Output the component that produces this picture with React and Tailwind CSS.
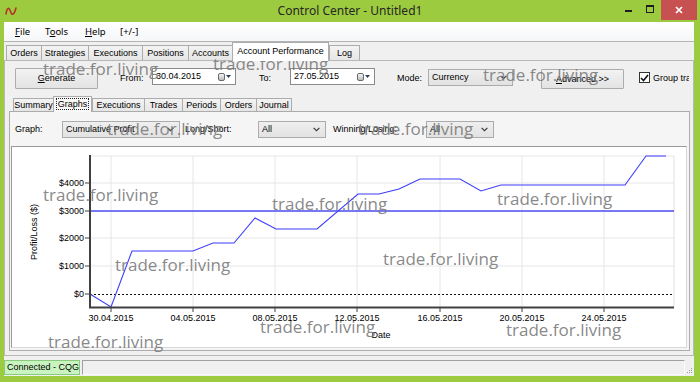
import React from "react";

const MAIN_TABS = [
  ["Orders", "w-[35px]"],
  ["Strategies", "w-[47px]"],
  ["Executions", "w-[54px]"],
  ["Positions", "w-[46px]"],
  ["Accounts", "w-[44px]"],
  ["Account Performance", "w-[97px]"],
  ["Log", "w-[31px]"],
];

const INNER_TABS = [
  ["Summary", "w-[40px]"],
  ["Graphs", "w-[39px]"],
  ["Executions", "w-[52px]"],
  ["Trades", "w-[38px]"],
  ["Periods", "w-[38px]"],
  ["Orders", "w-[36px]"],
  ["Journal", "w-[36px]"],
];

const GRID_X = [111, 193, 275, 357, 440, 522, 604];
const DATES = ["30.04.2015", "04.05.2015", "08.05.2015", "12.05.2015", "16.05.2015", "20.05.2015", "24.05.2015"];
const Y_TICKS = [
  [183, "$4000"],
  [211, "$3000"],
  [238, "$2000"],
  [266, "$1000"],
  [294, "$0"],
];
const SERIES =
  "90,294 111,307 132,251 193,251 213,243 234,243 255,218 276,229 317,229 358,194 379,194 399,189 420,179 460,179 481,191 501,185 625,185 646,156 666,156";

const wm =
  "absolute font-['Open_Sans',sans-serif] text-[17px] leading-[17px] text-[#7a7a7a]/90 whitespace-nowrap pointer-events-none";

function Chevron() {
  return (
    <svg width="7" height="5" viewBox="0 0 7 5">
      <path d="M0.6 0.8 L3.5 3.7 L6.4 0.8" fill="none" stroke="#3a3a3a" strokeWidth="1.2" />
    </svg>
  );
}

function Btn({ className, children }) {
  return (
    <div
      className={`${className} border border-[#acacac] rounded-[1px] bg-linear-to-b from-[#f2f2f2] to-[#e3e3e3] flex items-center justify-center`}
    >
      {children}
    </div>
  );
}

function Combo({ className, value }) {
  return (
    <div
      className={`${className} h-[17px] border border-[#acacac] bg-linear-to-b from-[#efefef] to-[#e2e2e2] flex items-center justify-between pl-[3px] pr-[5px]`}
    >
      <span>{value}</span>
      <Chevron />
    </div>
  );
}

function DateBox({ className, value }) {
  return (
    <div
      className={`${className} h-[17px] mt-[1px] border border-[#8a8a8a] bg-white flex items-center pl-[3px] pr-[4px]`}
    >
      <span className="flex-1">{value}</span>
      <span className="w-[7px] h-[8px] rounded-[2px] border border-[#6a6a6a] bg-linear-to-b from-[#f6f6f6] to-[#bdbdbd]" />
      <svg width="5" height="3" viewBox="0 0 5 3" className="ml-[1px]">
        <path d="M0 0 L5 0 L2.5 3 Z" fill="#2f3f5f" />
      </svg>
    </div>
  );
}

function TitleBar() {
  return (
    <div className="h-[22px] grid grid-cols-[1fr_auto_1fr]">
      <div className="flex items-center pl-[5px]">
        <svg width="12" height="10" viewBox="0 0 12 10">
          <path
            d="M1 8 C2 1 4 1 5.5 5.5 C7 10 9 9 11 2"
            fill="none"
            stroke="#b5342a"
            strokeWidth="1.6"
            strokeLinecap="round"
          />
        </svg>
      </div>
      <div className="flex items-center font-['Noto_Sans',sans-serif] text-[12px] text-[#262626]">
        Control Center - Untitled1
      </div>
      <div className="flex justify-end items-start pr-[3px]">
        <div className="w-[22px] h-[20px] flex justify-center">
          <span className="mt-[10px] w-[7px] h-[2px] bg-[#1e1e1e]" />
        </div>
        <div className="w-[22px] h-[20px] flex justify-center">
          <span className="mt-[5px] w-[8px] h-[8px] border border-t-2 border-[#1e1e1e]" />
        </div>
        <div className="w-[36px] h-[20px] bg-[#c75050] flex items-center justify-center">
          <svg width="8" height="8" viewBox="0 0 8 8">
            <path d="M1 1 L7 7 M7 1 L1 7" stroke="#fff" strokeWidth="1.7" />
          </svg>
        </div>
      </div>
    </div>
  );
}

function MenuBar() {
  return (
    <div className="h-[20px] border-b border-[#b4b4b4] bg-linear-to-b from-white to-[#f5f6f8] flex items-center pl-[11px] font-['Noto_Sans',sans-serif] text-[9.5px]">
      <span className="w-[30px]">
        <u>F</u>ile
      </span>
      <span className="w-[40px]">
        T<u>o</u>ols
      </span>
      <span className="w-[35px]">
        <u>H</u>elp
      </span>
      <span>[+/-]</span>
    </div>
  );
}

function MainTabs() {
  return (
    <div className="h-[18px] flex items-end pl-[2px]">
      {MAIN_TABS.map(([label, w]) =>
        label === "Account Performance" ? (
          <div
            key={label}
            className={`${w} h-[19px] -mb-px relative z-10 bg-white border border-b-0 border-[#acacac] flex justify-center pt-[4px] whitespace-nowrap`}
          >
            {label}
          </div>
        ) : (
          <div
            key={label}
            className={`${w} h-[15px] border-t border-l border-[#acacac] last:border-r bg-linear-to-b from-[#f3f3f3] to-[#e6e6e6] flex items-center justify-center`}
          >
            {label}
          </div>
        )
      )}
    </div>
  );
}

function ToolbarRow() {
  return (
    <div className="mt-[6px] mr-[4px] h-[23px] flex items-start pl-[10px] whitespace-nowrap overflow-hidden">
      <Btn className="w-[83px] h-[21px] mt-[1px] shrink-0">
        <span>
          <u>G</u>enerate
        </span>
      </Btn>
      <span className="ml-[22px] w-[32px] h-[23px] flex items-center shrink-0">From:</span>
      <DateBox className="w-[84px] shrink-0" value="30.04.2015" />
      <span className="ml-[23px] w-[31px] h-[23px] flex items-center shrink-0">To:</span>
      <DateBox className="w-[85px] shrink-0" value="27.05.2015" />
      <span className="ml-[22px] w-[31px] h-[23px] flex items-center shrink-0">Mode:</span>
      <Combo className="w-[85px] mt-[2px] shrink-0" value="Currency" />
      <Btn className="ml-[28px] w-[83px] h-[20px] mt-[2px] shrink-0">
        <span>
          <u>A</u>dvanced &gt;&gt;
        </span>
      </Btn>
      <span className="ml-[15px] mt-[5px] w-[11px] h-[11px] border border-[#333] bg-white flex items-center justify-center shrink-0">
        <svg width="9" height="8" viewBox="0 0 9 8">
          <path d="M1 4 L3.5 6.5 L8 1" fill="none" stroke="#111" strokeWidth="1.6" />
        </svg>
      </span>
      <span className="ml-[3px] h-[23px] flex items-center shrink-0">Group trades</span>
    </div>
  );
}

function InnerTabs() {
  return (
    <div className="mt-[6px] h-[15px] ml-[4px] pl-[4px] flex items-end">
      {INNER_TABS.map(([label, w]) =>
        label === "Graphs" ? (
          <div
            key={label}
            className={`${w} h-[16px] -mb-px relative z-10 bg-[#f8f8f8] border border-b-0 border-[#acacac] flex justify-center pt-[1px]`}
          >
            <span className="border border-dotted border-[#222] px-[1px] h-[12px] flex items-center">{label}</span>
          </div>
        ) : (
          <div
            key={label}
            className={`${w} h-[13px] border-t border-l border-[#acacac] last:border-r bg-linear-to-b from-[#f3f3f3] to-[#e6e6e6] flex items-center justify-center`}
          >
            {label}
          </div>
        )
      )}
    </div>
  );
}

function GraphRow() {
  return (
    <div className="mt-[9px] h-[17px] flex items-center pl-[5px] whitespace-nowrap">
      <span className="w-[47px]">Graph:</span>
      <Combo className="w-[118px]" value="Cumulative Profit" />
      <span className="ml-[5px] w-[73px]">Long/Short:</span>
      <Combo className="w-[68px]" value="All" />
      <span className="ml-[7px] w-[93px]">Winning/Losing:</span>
      <Combo className="w-[68px]" value="All" />
    </div>
  );
}

function Chart() {
  const font = "Liberation Sans, Arial, sans-serif";
  return (
    <div className="mt-[8px] ml-[1px] mr-[2px] h-[202px] border border-[#9a9a9a] border-b-[#d8d8d8] border-r-[#d8d8d8] bg-white">
      <svg width="674" height="200" viewBox="0 0 674 200">
        <g transform="translate(-12 -147)" fontFamily={font} fontSize="9" fill="#000">
          {GRID_X.map((x) => (
            <line key={x} x1={x} y1={156} x2={x} y2={307} stroke="#e6e6e6" />
          ))}
          {[156, 183, 238, 266].map((y) => (
            <line key={y} x1={90} y1={y} x2={674} y2={y} stroke="#e6e6e6" />
          ))}
          <line x1={674} y1={156} x2={674} y2={307} stroke="#e2e2e2" />
          <line x1={90} y1={294.5} x2={674} y2={294.5} stroke="#111" strokeDasharray="2 2" />
          <line x1={90} y1={211} x2={674} y2={211} stroke="#4b4bf0" strokeWidth="1.7" />
          <polyline points={SERIES} fill="none" stroke="#3d3dff" strokeWidth="1.1" />
          <line x1={90} y1={155} x2={90} y2={308} stroke="#404040" strokeWidth="2" />
          <line x1={89} y1={307.5} x2={674} y2={307.5} stroke="#404040" strokeWidth="2" />
          {Y_TICKS.map(([y, t]) => (
            <g key={t}>
              <line x1={85} y1={y} x2={90} y2={y} stroke="#404040" />
              <text x={84} y={y + 3} textAnchor="end">
                {t}
              </text>
            </g>
          ))}
          {GRID_X.map((x, i) => (
            <g key={x}>
              <line x1={x} y1={308} x2={x} y2={312} stroke="#404040" />
              <text x={x} y={321} textAnchor="middle">
                {DATES[i]}
              </text>
            </g>
          ))}
          <text x={37} y={232} textAnchor="middle" transform="rotate(-90 37 232)">
            Profit/Loss ($)
          </text>
          <text x={381} y={338} textAnchor="middle">
            Date
          </text>
        </g>
      </svg>
    </div>
  );
}

function StatusBar() {
  return (
    <div className="h-[16px] flex items-stretch pb-[1px] whitespace-nowrap">
      <div className="w-[76px] border border-[#86cc7c] bg-[#c9f4c0] flex items-center pl-[2px] overflow-hidden">
        Connected - CQG
      </div>
      <div className="flex-1 ml-[2px] border border-[#a0a0a0] border-b-[#fafafa] border-r-[#fafafa]" />
      <div className="w-[9px] flex items-end justify-end pr-[1px] pb-[1px]">
        <svg width="7" height="7" viewBox="0 0 7 7">
          <rect x="5" y="1" width="1" height="1" fill="#9a9a9a" />
          <rect x="3" y="3" width="1" height="1" fill="#9a9a9a" />
          <rect x="5" y="3" width="1" height="1" fill="#9a9a9a" />
          <rect x="1" y="5" width="1" height="1" fill="#9a9a9a" />
          <rect x="3" y="5" width="1" height="1" fill="#9a9a9a" />
          <rect x="5" y="5" width="1" height="1" fill="#9a9a9a" />
        </svg>
      </div>
    </div>
  );
}

function Watermarks() {
  return (
    <>
      <span className={`${wm} left-[43px] top-[60px]`}>trade.for.living</span>
      <span className={`${wm} left-[213px] top-[55px]`}>trade.for.living</span>
      <span className={`${wm} left-[483px] top-[66px]`}>trade.for.living</span>
      <span className={`${wm} left-[107px] top-[120px]`}>trade.for.living</span>
      <span className={`${wm} left-[358px] top-[120px]`}>trade.for.living</span>
      <span className={`${wm} left-[43px] top-[186px]`}>trade.for.living</span>
      <span className={`${wm} left-[115px] top-[256px]`}>trade.for.living</span>
      <span className={`${wm} left-[272px] top-[195px]`}>trade.for.living</span>
      <span className={`${wm} left-[497px] top-[190px]`}>trade.for.living</span>
      <span className={`${wm} left-[383px] top-[250px]`}>trade.for.living</span>
      <span className={`${wm} left-[48px] top-[333px]`}>trade.for.living</span>
      <span className={`${wm} left-[260px] top-[318px]`}>trade.for.living</span>
      <span className={`${wm} left-[506px] top-[321px]`}>trade.for.living</span>
    </>
  );
}

export default function App() {
  return (
    <div className="relative w-[700px] h-[382px] overflow-hidden bg-[#9dcb3f] flex flex-col font-['Liberation_Sans',Arial,sans-serif] text-[9px] leading-none text-black">
      <TitleBar />
      <div className="flex-1 min-h-0 ml-[4px] mr-[6px] mb-[6px] flex flex-col bg-[#f0f0f0]">
        <MenuBar />
        <MainTabs />
        <div className="h-[296px] mb-[4px] border border-[#b8b8b8] bg-[#f0f0f0] flex flex-col overflow-hidden">
          <ToolbarRow />
          <InnerTabs />
          <div className="h-[240px] ml-[4px] mr-[3px] border border-[#acacac] bg-[#f5f5f5] flex flex-col">
            <GraphRow />
            <Chart />
          </div>
        </div>
        <StatusBar />
      </div>
      <Watermarks />
    </div>
  );
}
